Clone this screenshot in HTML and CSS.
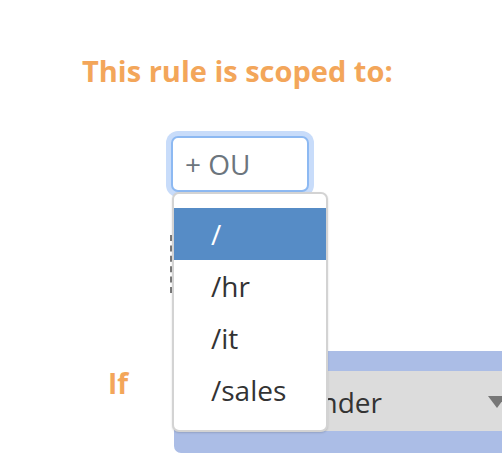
FILE: index.html
```html
<!DOCTYPE html>
<html>
<head>
<meta charset="utf-8">
<link rel="stylesheet" href="styles.css">
</head>
<body>
<div class="page">
  <div class="title">This rule is scoped to:</div>
  <div class="scope">
    <div class="ou-field">
      <div class="ou-input">+ OU</div>
      <div class="dash"></div>
      <ul class="menu">
        <li class="item active">/</li>
        <li class="item">/hr</li>
        <li class="item">/it</li>
        <li class="item">/sales</li>
      </ul>
    </div>
  </div>
  <div class="if-row">
    <div class="if-label">If</div>
    <div class="panel">
      <div class="select">
        <span class="select-text">Email sender</span>
        <svg class="caret" width="18" height="12" viewBox="0 0 18 12"><path d="M0 0 H18 L9 12 Z" fill="#777"/></svg>
      </div>
    </div>
  </div>
</div>
</body>
</html>
```
FILE: styles.css
```css
html, body {
  margin: 0;
  padding: 0;
  overflow: hidden;
  background: #fff;
}
.page {
  width: 502px;
  height: 474px;
  overflow: hidden;
  font-family: "Open Sans", "Liberation Sans", sans-serif;
  font-size: 28px;
  line-height: 38px;
  color: #333;
}
.title {
  margin-top: 52px;
  padding-left: 82px;
  font-size: 29px;
  font-weight: 700;
  color: #f3a65a;
  white-space: nowrap;
}
.scope {
  margin-top: 46px;
  padding-left: 171px;
}
.ou-field {
  position: relative;
  width: 138px;
}
.ou-input {
  box-sizing: border-box;
  height: 56px;
  border: 2px solid #8db9f2;
  border-radius: 7px;
  box-shadow: 0 0 0 5px #c8dcfa;
  padding: 7px 12px;
  color: #6c757d;
  background: #fff;
}
.dash {
  position: absolute;
  left: -1px;
  top: 99px;
  height: 58px;
  border-left: 2px dashed #7a7a7a;
  z-index: 1;
}
.menu {
  position: absolute;
  left: 1px;
  top: 56px;
  width: 156px;
  box-sizing: border-box;
  margin: 0;
  padding: 14px 0;
  list-style: none;
  background: #fff;
  border: 2px solid #d3d3d3;
  border-radius: 7px;
  box-shadow: 0 1px 2px rgba(0, 0, 0, 0.15);
  z-index: 5;
}
.item {
  height: 52px;
  padding: 7px 0 7px 37px;
  box-sizing: border-box;
  color: #333;
}
.item.active {
  background: #568cc6;
  color: #fff;
}
.if-row {
  display: flex;
  align-items: flex-start;
  margin-top: 159px;
  width: 560px;
}
.if-label {
  width: 66px;
  padding-left: 108px;
  padding-top: 13px;
  font-weight: 700;
  color: #f3a65a;
}
.panel {
  background: #abbde6;
  border-radius: 7px;
  padding: 20px 21px 22px;
  width: 372px;
  box-sizing: border-box;
}
.select {
  display: flex;
  align-items: center;
  justify-content: space-between;
  height: 60px;
  box-sizing: border-box;
  background: #dcdcdc;
  padding: 0 19px 0 18px;
  color: #333;
}
.select-text {
  padding-top: 2px;
  white-space: nowrap;
}
.caret {
  display: block;
  margin-top: 2px;
}
```
